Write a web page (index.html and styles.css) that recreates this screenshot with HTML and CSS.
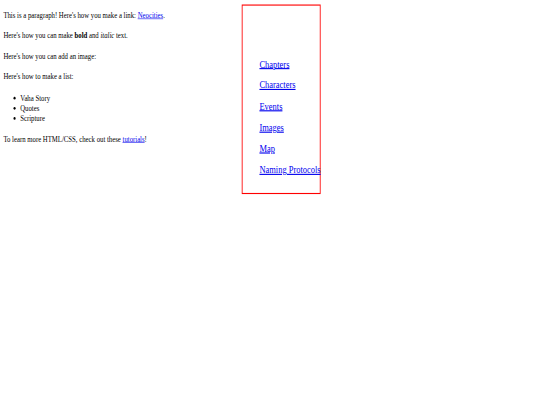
FILE: index.html
```html
<!DOCTYPE html>
<html>
<head>
<meta charset="utf-8">
<title>Vaha</title>
<link rel="stylesheet" href="styles.css">
</head>
<body>
<div class="frame">
<div class="screen">
  <main class="content">
    <p>This is a paragraph! Here's how you make a link: <a href="#">Neocities</a>.</p>
    <p>Here's how you can make <strong>bold</strong> and <em>italic</em> text.</p>
    <p>Here's how you can add an image:</p>
    <p>Here's how to make a list:</p>
    <ul>
      <li>Vaha Story</li>
      <li>Quotes</li>
      <li>Scripture</li>
    </ul>
    <p>To learn more HTML/CSS, check out these <a href="#">tutorials</a>!</p>
  </main>
  <ul class="nav">
    <li><a href="#">Chapters</a></li>
    <li><a href="#">Characters</a></li>
    <li><a href="#">Events</a></li>
    <li><a href="#">Images</a></li>
    <li><a href="#">Map</a></li>
    <li><a href="#">Naming Protocols</a></li>
  </ul>
</div>
</div>
</body>
</html>
```
FILE: styles.css
```css
html, body {
  margin: 0;
  padding: 0;
  background: #ffffff;
  overflow: hidden;
}

.frame {
  width: 540px;
  height: 405px;
  overflow: hidden;
}

.screen {
  width: 1280px;
  height: 720px;
  box-sizing: border-box;
  padding: 8px;
  display: flex;
  align-items: flex-start;
  font-family: "Liberation Serif", "Times New Roman", serif;
  font-size: 16px;
  color: #000000;
  transform: scale(0.421875, 0.5625);
  transform-origin: 0 0;
}

.content {
  width: 565px;
  flex: none;
  line-height: 18px;
}

.content p {
  margin: 18.5px 0;
}

.content ul {
  margin: 19.5px 0;
  padding-left: 40px;
}

.content p:first-child {
  margin-top: 9.5px;
}

a {
  color: #0000ee;
}

.nav {
  flex: none;
  width: 143px;
  margin: 0;
  padding: 91.5px 0 30.5px 40px;
  border: 2px solid #ff0000;
  list-style: none;
  font-size: 20px;
  display: flex;
  flex-direction: column;
  gap: 14.7px;
  white-space: nowrap;
}
```
